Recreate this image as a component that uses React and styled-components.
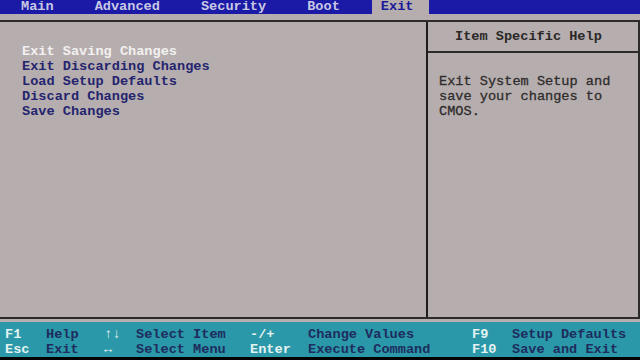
import React from "react";
import styled, { createGlobalStyle } from "styled-components";

const Global = createGlobalStyle`
  html, body { margin: 0; padding: 0; background: #000; }
  body { font-family: "Liberation Mono", "DejaVu Sans Mono", monospace; }
`;

const Screen = styled.div`
  width: 640px;
  height: 360px;
  display: flex;
  flex-direction: column;
  background: #b6aeae;
  font-size: 13.6px;
  font-weight: bold;
  overflow: hidden;
`;

const TabBar = styled.div`
  height: 14px;
  background: #1a1aa6;
  display: flex;
  padding-left: 12px;
`;

const Tab = styled.div`
  height: 14px;
  line-height: 14px;
  padding: 0 16px 0 9px;
  margin-right: 16px;
  color: ${p => (p.active ? "#1a1a9a" : "#c8c8e4")};
  background: ${p => (p.active ? "#b6aeae" : "transparent")};
`;

const Frame = styled.div`
  margin-top: 6px;
  height: 295px;
  display: flex;
  border-top: 2px solid #2c2a2a;
  border-bottom: 2px solid #2c2a2a;
  border-right: 2px solid #2c2a2a;
`;

const MenuPanel = styled.div`
  width: 428px;
  padding: 22px 0 0 22px;
  box-sizing: border-box;
  border-right: 2px solid #1e1c1c;
`;

const MenuItem = styled.div`
  line-height: 15px;
  color: ${p => (p.selected ? "#f2f0f0" : "#24246e")};
`;

const HelpPanel = styled.div`
  flex: 1;
  display: flex;
  flex-direction: column;
`;

const HelpHeader = styled.div`
  height: 29px;
  line-height: 30px;
  padding-left: 27px;
  color: #2a2828;
  border-bottom: 2px solid #2c2a2a;
`;

const HelpText = styled.div`
  padding: 21px 0 0 11px;
  line-height: 15px;
  color: #2e2c2c;
  font-weight: normal;
  -webkit-text-stroke: 0.3px #2e2c2c;
`;

const KeyBar = styled.div`
  margin-top: 3px;
  height: 35px;
  box-sizing: border-box;
  padding: 5px 0 0 5px;
  background: #2a98a8;
  display: grid;
  grid-template-columns: 41px 58px 32px 114px 58px 164px 40px 1fr;
  grid-auto-rows: 15px;
  line-height: 15px;
`;

const Key = styled.span`
  color: #e4f2f2;
`;

const Desc = styled.span`
  color: #1e2c5e;
`;

const Bottom = styled.div`
  flex: 1;
  background: #000;
`;

const tabs = ["Main", "Advanced", "Security", "Boot", "Exit"];
const items = [
  "Exit Saving Changes",
  "Exit Discarding Changes",
  "Load Setup Defaults",
  "Discard Changes",
  "Save Changes",
];
const keys = [
  ["F1", "Help", "↑↓", "Select Item", "-/+", "Change Values", "F9", "Setup Defaults"],
  ["Esc", "Exit", "↔", "Select Menu", "Enter", "Execute Command", "F10", "Save and Exit"],
];

export default function App() {
  return (
    <Screen>
      <Global />
      <TabBar>
        {tabs.map(t => (
          <Tab key={t} active={t === "Exit"}>{t}</Tab>
        ))}
      </TabBar>
      <Frame>
        <MenuPanel>
          {items.map((it, i) => (
            <MenuItem key={it} selected={i === 0}>{it}</MenuItem>
          ))}
        </MenuPanel>
        <HelpPanel>
          <HelpHeader>Item Specific Help</HelpHeader>
          <HelpText>
            Exit System Setup and<br />
            save your changes to<br />
            CMOS.
          </HelpText>
        </HelpPanel>
      </Frame>
      <KeyBar>
        {keys.map(row =>
          row.map((t, i) =>
            i % 2 === 0 ? <Key key={t}>{t}</Key> : <Desc key={t}>{t}</Desc>
          )
        )}
      </KeyBar>
      <Bottom />
    </Screen>
  );
}
